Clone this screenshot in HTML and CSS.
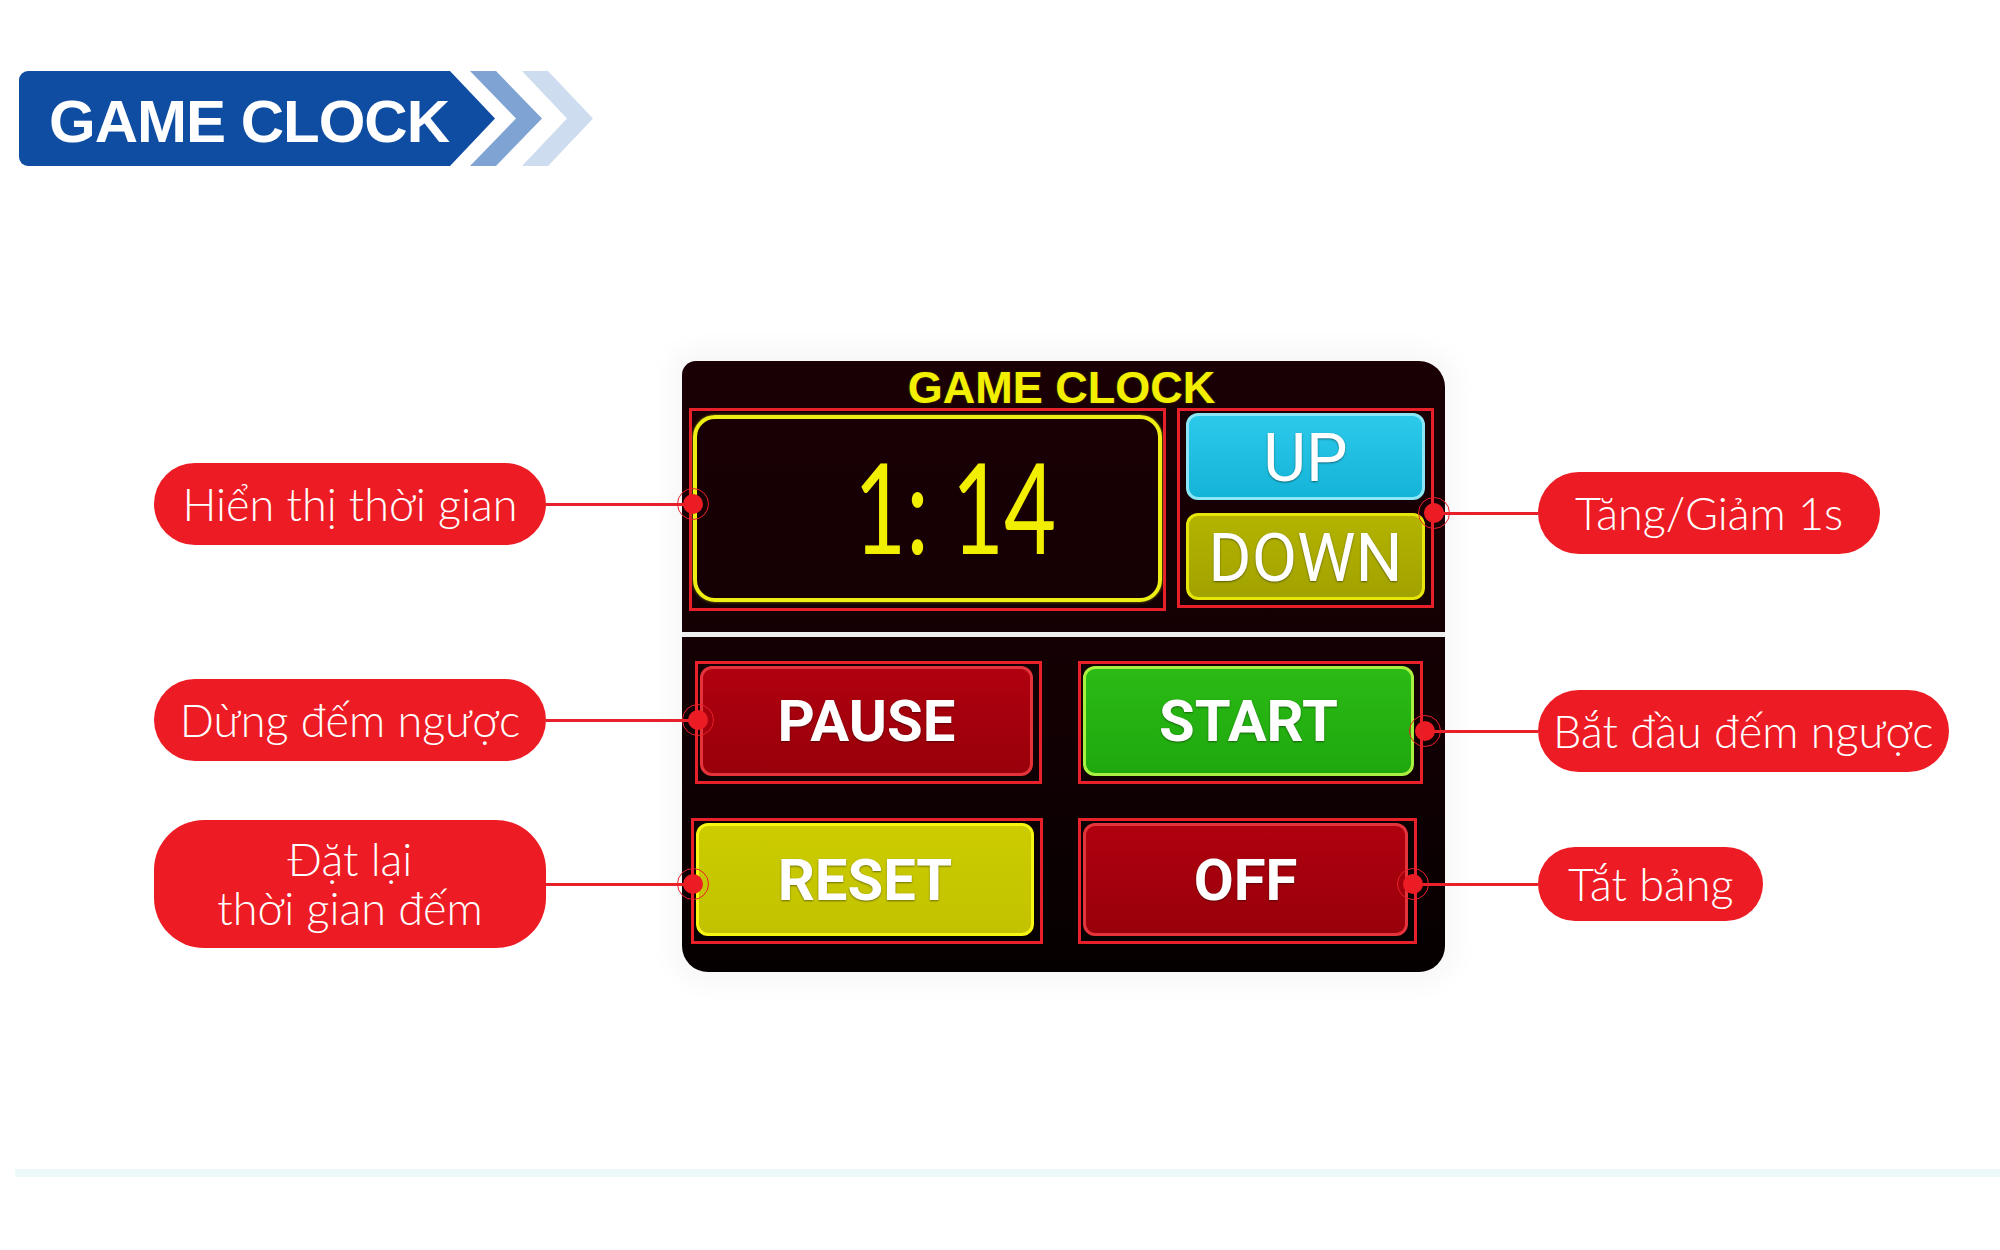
FILE: index.html
```html
<!DOCTYPE html>
<html lang="vi">
<head>
    <meta charset="UTF-8">
    <meta name="viewport" content="width=device-width, initial-scale=1.0">
    <title>Game Clock</title>
    <link rel="stylesheet" href="styles.css">
</head>
<body>
    <header class="page-head">
        <div class="banner">
            <div class="banner-label">GAME CLOCK</div>
            <svg class="banner-arrows" width="123" height="95" viewBox="0 0 123 95">
                <polygon points="0,0 26,0 72,47.5 26,95 0,95 46,47.5" fill="#7fa4d4"/>
                <polygon points="52,0 78,0 123,47.5 78,95 52,95 97,47.5" fill="#cddcee"/>
            </svg>
        </div>
    </header>

    <main class="stage">
        <div class="callouts callouts-left">
            <div class="callout callout-display">
                <span class="pill">Hiển thị thời gian</span>
                <span class="link"></span>
            </div>
            <div class="callout callout-pause">
                <span class="pill">Dừng đếm ngược</span>
                <span class="link"></span>
            </div>
            <div class="callout callout-reset">
                <span class="pill pill-tall">Đặt lại<br>thời gian đếm</span>
                <span class="link"></span>
            </div>
        </div>

        <div class="board">
            <div class="board-title">GAME CLOCK</div>
            <div class="board-top">
                <div class="frame frame-display">
                    <div class="display"><span class="digits">1: 14</span></div>
                </div>
                <div class="frame frame-step">
                    <div class="key key-up">UP</div>
                    <div class="key key-down">DOWN</div>
                </div>
            </div>
            <div class="board-rule"></div>
            <div class="board-keys">
                <div class="frame frame-pause"><div class="key key-red">PAUSE</div></div>
                <div class="frame frame-start"><div class="key key-green">START</div></div>
                <div class="frame frame-reset"><div class="key key-yellow">RESET</div></div>
                <div class="frame frame-off"><div class="key key-red">OFF</div></div>
            </div>
        </div>

        <div class="callouts callouts-right">
            <div class="callout callout-step">
                <span class="link"></span>
                <span class="pill">Tăng/Giảm 1s</span>
            </div>
            <div class="callout callout-start">
                <span class="link"></span>
                <span class="pill">Bắt đầu đếm ngược</span>
            </div>
            <div class="callout callout-off">
                <span class="link"></span>
                <span class="pill">Tắt bảng</span>
            </div>
        </div>
    </main>

    <div class="footer-rule"></div>
</body>
</html>
```

FILE: styles.css
```css
body {
    margin: 0;
    background-color: #fff;
    font-family: "Liberation Sans", Arial, sans-serif;
}

/* header banner */
.page-head {
    padding: 71px 0 0 19px;
}
.banner {
    display: flex;
    align-items: center;
}
.banner-label {
    box-sizing: border-box;
    width: 476px;
    height: 95px;
    padding: 5px 0 0 30px;
    display: flex;
    align-items: center;
    background-color: #0f4da2;
    border-radius: 9px 0 0 9px;
    clip-path: polygon(0 0, 431px 0, 476px 50%, 431px 100%, 0 100%);
    color: #fff;
    font-weight: bold;
    font-size: 60px;
    letter-spacing: -1px;
}
.banner-arrows {
    margin-left: -25px;
}

/* main diagram */
.stage {
    display: flex;
    margin-top: 195px;
}
.callouts {
    position: relative;
    z-index: 2;
}
.callouts-left {
    width: 682px;
    box-sizing: border-box;
    padding: 102px 0 0 154px;
}
.callouts-right {
    flex: 1;
    padding-top: 111px;
}
.callout {
    display: flex;
    align-items: center;
}
.pill {
    box-sizing: border-box;
    display: flex;
    align-items: center;
    justify-content: center;
    text-align: center;
    background-color: #ed1c24;
    color: #fff;
    border-radius: 42px;
    font-family: Lato, "Open Sans", sans-serif;
    font-weight: 300;
    font-size: 45px;
    line-height: 49px;
    white-space: nowrap;
}
.callouts-left .pill {
    width: 392px;
    height: 82px;
}
.pill-tall {
    height: 128px !important;
    border-radius: 50px;
}
.callouts-right .pill {
    height: 82px;
    padding: 0 30px;
}
.link {
    position: relative;
    height: 3px;
    background-color: #e8202a;
}
.link::before,
.link::after {
    content: "";
    position: absolute;
    top: 50%;
    border-radius: 50%;
    transform: translate(-50%, -50%);
}
.link::after {
    width: 20px;
    height: 20px;
    background-color: #ec1c24;
}
.link::before {
    width: 30px;
    height: 30px;
    border: 1.5px solid #e8202a;
}
.callouts-left .link {
    flex: 1;
    margin-right: -11px;
}
.callouts-left .link::before,
.callouts-left .link::after {
    left: 100%;
}
.callouts-right .link::before,
.callouts-right .link::after {
    left: 0;
}

.callout-pause { margin-top: 134px; }
.callout-pause .link { margin-right: -16px; }
.callout-reset { margin-top: 59px; }

.callout-step .link { width: 104px; margin-left: -11px; }
.callout-step .pill { padding: 0 37px; }
.callout-start { margin-top: 136px; }
.callout-start .link { width: 113px; margin-left: -20px; }
.callout-start .pill { padding: 0 15px; }
.callout-off { margin-top: 75px; }
.callout-off .link { width: 125px; margin-left: -32px; }
.callout-off .pill { height: 74px; }

/* the clock board */
.board {
    box-sizing: border-box;
    width: 763px;
    height: 611px;
    padding: 5px 11px 28px 7px;
    background: linear-gradient(#1a0005, #120003 60%, #050000);
    border-radius: 14px 26px 26px 26px;
    box-shadow: 0 0 24px 14px rgba(0, 30, 40, 0.03);
}
.board-title {
    height: 42px;
    line-height: 44px;
    text-align: center;
    color: #f3ef00;
    font-weight: bold;
    font-size: 45px;
    text-shadow: 0 0 2px #4a4200;
}
.board-top {
    display: flex;
    align-items: flex-start;
    gap: 11px;
    height: 203px;
}
.frame {
    box-sizing: border-box;
    border: 3px solid #e8202a;
    display: flex;
}
.frame-display {
    width: 477px;
    height: 203px;
    padding: 4px 1px 6px 1px;
}
.display {
    flex: 1;
    display: flex;
    align-items: center;
    padding: 0 0 8px 157px;
    border: 4px solid #eeee14;
    border-radius: 22px;
    box-shadow: 0 0 3px #8a8a00;
}
.digits {
    display: inline-block;
    color: #f2ee00;
    font-family: Lato, sans-serif;
    font-size: 90px;
    line-height: 1;
    white-space: pre;
    transform: scaleY(1.4);
}
.frame-step {
    width: 257px;
    height: 200px;
    padding: 2px 6px 5px 6px;
    flex-direction: column;
    gap: 13px;
}
.key {
    box-sizing: border-box;
    flex: 1;
    display: flex;
    align-items: center;
    justify-content: center;
    border: 3px solid;
    border-radius: 12px;
    color: #fff;
    font-family: Roboto, "Liberation Sans", sans-serif;
    font-weight: bold;
    font-size: 58px;
    text-shadow: 0 1px 2px rgba(0, 0, 0, 0.45);
}
.key-up,
.key-down {
    font-weight: normal;
    font-size: 66px;
    padding-top: 4px;
}
.key-up {
    background: linear-gradient(#2cc9ea, #14b4d8);
    border-color: #8be7f6;
}
.key-down {
    background: linear-gradient(#b3b300, #a2a200);
    border-color: #e6e60a;
}
.board-rule {
    height: 5px;
    margin: 21px -11px 24px -7px;
    background-color: #eeeeee;
}
.board-keys {
    display: grid;
    grid-template-columns: 352px 345px;
    grid-template-rows: 123px 126px;
    column-gap: 35px;
    row-gap: 34px;
    margin-left: 2px;
}
.board-keys .frame {
    padding: 2px 6px 5px 2px;
}
.frame-pause { margin-left: 4px; margin-right: 1px; }
.frame-off { margin-right: 6px; }
.key-red {
    background: linear-gradient(#b0000f, #98000a);
    border-color: #e4333b;
}
.key-green {
    background: linear-gradient(#2abb14, #1fa80e);
    border-color: #aaf040;
}
.key-yellow {
    background: linear-gradient(#cccc00, #c2c200);
    border-color: #f6f610;
}

.footer-rule {
    height: 8px;
    margin: 197px 0 0 15px;
    background-color: #ebf9fa;
}
```
